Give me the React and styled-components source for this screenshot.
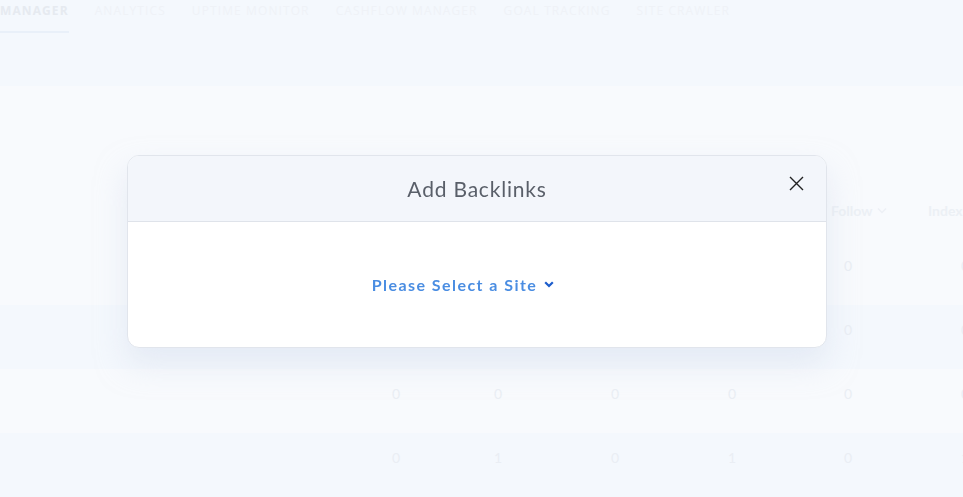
import React from "react";
import styled, { createGlobalStyle } from "styled-components";

const GlobalStyle = createGlobalStyle`
  body {
    margin: 0;
    background: #f4f8fd;
    font-family: Lato, "Open Sans", sans-serif;
    overflow: hidden;
  }
`;

const Page = styled.div`
  width: 963px;
  height: 497px;
  display: flex;
  flex-direction: column;
  overflow: hidden;
`;

const TopBar = styled.div`
  height: 88px;
  background: #f4f8fd;
`;

const Tabs = styled.div`
  display: flex;
  gap: 26px;
  height: 33px;
  align-items: stretch;
`;

const Tab = styled.div`
  font-family: "Open Sans", Lato, sans-serif;
  font-size: 12px;
  letter-spacing: 1.1px;
  font-weight: ${(p) => (p.active ? 700 : 400)};
  color: ${(p) => (p.active ? "#e6eaf0" : "#eff2f7")};
  padding-top: 2px;
  border-bottom: 2px solid ${(p) => (p.active ? "#e9f0f9" : "transparent")};
  box-sizing: border-box;
  white-space: nowrap;
`;

const Content = styled.div`
  flex: 1;
  background: #f8fafd;
  padding-top: 92px;
`;

const Row = styled.div`
  display: grid;
  grid-template-columns: 345px 102px 102px 132px 102px 130px 104px;
  height: ${(p) => (p.head ? "63px" : "64px")};
  background: ${(p) => (p.shade ? "#f4f8fd" : "#f8fafd")};
`;

const Cell = styled.div`
  display: flex;
  align-items: flex-start;
  justify-content: center;
  padding-top: 16px;
  font-size: 14px;
  color: #eaeef4;
  white-space: nowrap;
`;

const HeadCell = styled.div`
  display: flex;
  align-items: center;
  padding-left: ${(p) => p.indent || 0}px;
  padding-top: 2px;
  font-size: 14px;
  font-weight: 700;
  color: #ecf0f5;
  white-space: nowrap;
`;

const Backdrop = styled.div`
  position: fixed;
  inset: 0;
  display: flex;
  justify-content: center;
  align-items: flex-start;
  padding: 155px 9px 0 0;
`;

const Modal = styled.div`
  position: relative;
  width: 698px;
  background: #fff;
  border: 1px solid #e1e5ec;
  border-radius: 12px;
  box-shadow: 0 16px 30px rgba(214, 222, 238, 0.5);
  overflow: hidden;
`;

const ModalHeader = styled.div`
  height: 65px;
  background: #f3f6fb;
  border-bottom: 1px solid #dfe3ea;
  display: flex;
  align-items: center;
  justify-content: center;
`;

const Title = styled.h2`
  margin: 0;
  font-family: Lato, sans-serif;
  font-weight: 400;
  font-size: 21px;
  letter-spacing: 0.8px;
  color: #595f69;
`;

const Close = styled.button`
  position: absolute;
  top: 18px;
  right: 21px;
  width: 18px;
  height: 18px;
  padding: 0;
  border: 0;
  background: none;
  display: flex;
  align-items: center;
  justify-content: center;
`;

const ModalBody = styled.div`
  height: 125px;
  display: flex;
  align-items: center;
  justify-content: center;
  padding-right: 28px;
`;

const SiteSelect = styled.div`
  display: flex;
  align-items: center;
  gap: 7px;
  font-family: Lato, sans-serif;
  font-size: 16px;
  font-weight: 700;
  letter-spacing: 1.45px;
  color: #4a8de2;
`;

const headers = [
  { label: "" },
  { label: "" },
  { label: "" },
  { label: "" },
  { label: "" },
  { label: "Follow", indent: 48, sort: true },
  { label: "Index", indent: 15 },
];

const rows = [
  ["", "", "", "", "", "0", "0"],
  ["", "", "", "", "", "0", "0"],
  ["", "0", "0", "0", "0", "0", "0"],
  ["", "0", "1", "0", "1", "0", "1"],
];

export default function App() {
  return (
    <Page>
      <GlobalStyle />
      <TopBar>
        <Tabs>
          <Tab active>MANAGER</Tab>
          <Tab>ANALYTICS</Tab>
          <Tab>UPTIME MONITOR</Tab>
          <Tab>CASHFLOW MANAGER</Tab>
          <Tab>GOAL TRACKING</Tab>
          <Tab>SITE CRAWLER</Tab>
        </Tabs>
      </TopBar>
      <Content>
        <Row head>
          {headers.map((h, i) => (
            <HeadCell key={i} indent={h.indent}>
              {h.label}
              {h.sort && (
                <svg width="10" height="7" viewBox="0 0 10 7" style={{ marginLeft: 5 }}>
                  <polyline points="1,1.5 5,5.5 9,1.5" fill="none" stroke="#ecf0f5" strokeWidth="1.5" />
                </svg>
              )}
            </HeadCell>
          ))}
        </Row>
        {rows.map((r, i) => (
          <Row key={i} shade={i % 2 === 1}>
            {r.map((v, j) => (
              <Cell key={j}>{v}</Cell>
            ))}
          </Row>
        ))}
      </Content>
      <Backdrop>
        <Modal>
          <ModalHeader>
            <Title>Add Backlinks</Title>
          </ModalHeader>
          <Close aria-label="close">
            <svg width="15" height="15" viewBox="0 0 15 15">
              <path d="M1 1 L14 14 M14 1 L1 14" stroke="#222" strokeWidth="1.4" />
            </svg>
          </Close>
          <ModalBody>
            <SiteSelect>
              Please Select a Site
              <svg width="10" height="7" viewBox="0 0 10 7">
                <polyline points="1.2,1.2 5,5 8.8,1.2" fill="none" stroke="#1d5dcc" strokeWidth="2.2" />
              </svg>
            </SiteSelect>
          </ModalBody>
        </Modal>
      </Backdrop>
    </Page>
  );
}
